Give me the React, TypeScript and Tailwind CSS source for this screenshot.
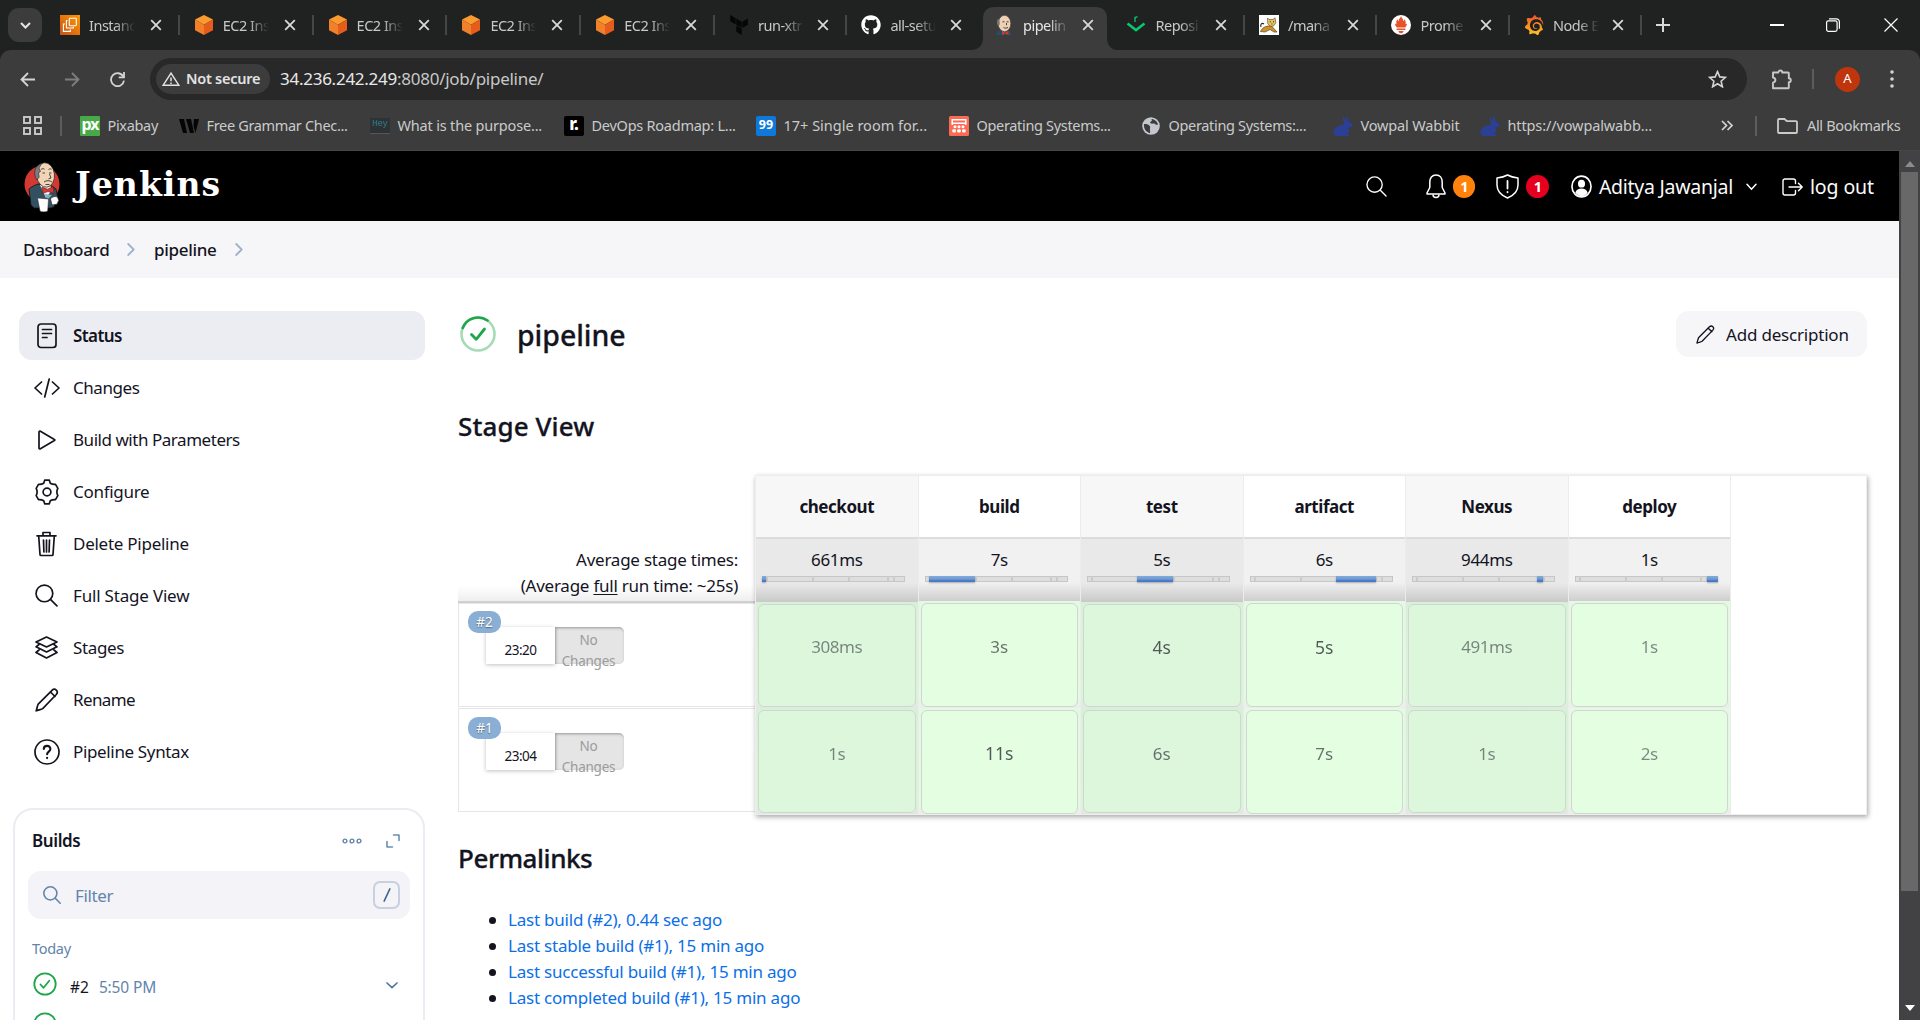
import React from "react";
import { FaGithub } from "react-icons/fa";
import { SiTerraform, SiPrometheus, SiGrafana } from "react-icons/si";

/* ---------- browser favicons ---------- */

function Ec2Icon() {
  return (
    <svg width="20" height="20" viewBox="0 0 20 20">
      <defs>
        <linearGradient id="ec2" x1="0" y1="1" x2="1" y2="0">
          <stop offset="0" stopColor="#c8511b" />
          <stop offset="1" stopColor="#ff9900" />
        </linearGradient>
      </defs>
      <rect width="20" height="20" fill="url(#ec2)" />
      <g fill="none" stroke="#fff" strokeWidth="1.1">
        <rect x="9.3" y="3.3" width="7" height="7.4" rx="0.6" />
        <path d="M7.4 5.6H6.4V13h7v-1.2" />
        <path d="M5 9H3.4v7.4h7V14.4" />
      </g>
    </svg>
  );
}

function CubeIcon() {
  return (
    <svg width="20" height="20" viewBox="0 0 20 20">
      <path d="M10 0l9 4.6L10 9.8 1 4.6z" fill="#fb9a2e" />
      <path d="M1 4.6l9 5.2V20l-9-4.7z" fill="#f0812a" />
      <path d="M19 4.6l-9 5.2V20l9-4.7z" fill="#e65c1c" />
    </svg>
  );
}

function ButlerHead() {
  return (
    <svg width="20" height="20" viewBox="0 0 20 20">
      <path d="M2 20c0-3 2-4.500 5-4.500h6c3 0 4.500 2 4.500 4.500z" fill="#264d63" />
      <ellipse cx="10.500" cy="8.500" rx="6.300" ry="8.200" fill="#efd0b4" stroke="#444" strokeWidth="0.700" />
      <path d="M4 4C2.500 6 2.700 9 4 11l1.800-1.600L5.500 5z" fill="#777" />
      <path d="M8.500 6.800h2M12.600 6.800h2M12.500 8v2.200M9.500 12.400c1.500 1 3 1 4.500 0" stroke="#333" strokeWidth="0.900" fill="none" />
      <path d="M8 16l3.200 1.800L14.500 16v4l-3.300-1.500L8 20z" fill="#d33833" />
    </svg>
  );
}

function RepoIcon() {
  return (
    <svg width="20" height="20" viewBox="0 0 20 20">
      <path d="M1.500 8.500L10 15l8.500-6.500" stroke="#08c76c" strokeWidth="2.600" fill="none" />
      <path d="M9 7V1.800M9 3.600C9.400 2.200 10.500 1.800 11.600 2" stroke="#08c76c" strokeWidth="1.300" fill="none" />
    </svg>
  );
}

function TomcatIcon() {
  return (
    <svg width="20" height="20" viewBox="0 0 20 20">
      <rect width="20" height="20" fill="#fff" />
      <path d="M8.500 3l1.500 1.500h4L16 2.800l.8 5-2 3-3 1-3-3z" fill="#e8c36a" stroke="#6b5520" strokeWidth="0.700" />
      <path d="M1.500 16.500C4 11 9 10.500 13 11.500l5 5.500h-3l-4-2.500L6 17z" fill="#cf9233" stroke="#5d4a1a" strokeWidth="0.700" />
      <path d="M2 12c-1-3 1-4.500 3-3" stroke="#222" strokeWidth="1.100" fill="none" />
      <path d="M10.800 6.800h1M14 6.800h1M12.400 9h1" stroke="#222" strokeWidth="1" />
    </svg>
  );
}

function RabbitIcon() {
  return (
    <svg width="20" height="20" viewBox="0 0 20 20" fill="#2b3f94">
      <path d="M10 1c1.800.8 2.700 2.600 3.200 4.200C13.200 3.400 13 1.500 13.700 0c1.500 1.500 1.900 3.800 1.600 5.800 2.200.5 4.200 2 4.500 4-.8 1.300-2.400 1.600-4 1.600.7 2.400.1 4.900-1.600 6.600l2 .6V20H3.500c-.9 0-1.700-.6-2-1.500-1.300-.2-1.800-1.700-1-2.700C1 11.500 5 9.300 8.700 9.200c1.100 0 1.700-.5 2.400-1.400C10.800 5.500 9.300 3.500 10 1z" />
    </svg>
  );
}

/* ---------- browser chrome ---------- */

function CloseX({ size = 12 }: { size?: number }) {
  return (
    <svg width={size} height={size} viewBox="0 0 12 12" stroke="#d6d8d9" strokeWidth="1.800" fill="none">
      <path d="M1.200 1.200l9.600 9.600M10.800 1.200l-9.600 9.600" />
    </svg>
  );
}

type Tab = { title: string; icon: React.ReactNode; active?: boolean; sep?: boolean };

const tabs: Tab[] = [
  { title: "Instanc", icon: <Ec2Icon />, sep: true },
  { title: "EC2 Ins", icon: <CubeIcon />, sep: true },
  { title: "EC2 Ins", icon: <CubeIcon />, sep: true },
  { title: "EC2 Ins", icon: <CubeIcon />, sep: true },
  { title: "EC2 Ins", icon: <CubeIcon />, sep: true },
  { title: "run-xtr", icon: <SiTerraform size={20} color="#060606" />, sep: true },
  { title: "all-setu", icon: <FaGithub size={20} color="#fff" /> },
  { title: "pipelin", icon: <ButlerHead />, active: true },
  { title: "Reposi", icon: <RepoIcon />, sep: true },
  { title: "/mana", icon: <TomcatIcon />, sep: true },
  {
    title: "Prome",
    icon: (
      <span className="flex size-5 items-center justify-center rounded-full bg-white">
        <svg width="14" height="18" viewBox="0 0 14 18" fill="#e6522c">
          <path d="M7 0c.4 2.200 2.600 3 2.400 5.200.8-.6.9-1.300.9-2.200 1.300 1.600 1.800 3.400 1.200 5.200L13 7.600c-.1 1.600-.8 2.900-1.800 3.900H2.800C1.800 10.500 1.100 9.200 1 7.600l1.500.6C1.900 6.400 2.400 4.600 3.700 3c0 .9.100 1.600.9 2.200C4.400 3 6.600 2.200 7 0zM2.600 12.400h8.800V14H2.600zM4.400 14.900h5.200c-.4 1.500-1.300 2.400-2.600 2.400s-2.200-.9-2.600-2.400z" />
        </svg>
      </span>
    ),
    sep: true,
  },
  {
    title: "Node E",
    icon: (
      <svg width="20" height="20" viewBox="0 0 24 24">
        <defs>
          <linearGradient id="graf" x1="0" y1="1" x2="0" y2="0">
            <stop offset="0" stopColor="#fcc624" />
            <stop offset="1" stopColor="#f0512a" />
          </linearGradient>
        </defs>
        <SiGrafana size={24} fill="url(#graf)" />
      </svg>
    ),
    sep: true,
  },
];

function TabStrip() {
  return (
    <div className="flex h-[50px] items-end bg-[#202221]">
      <button className="mb-2 ml-2 flex h-[34px] w-[34px] items-center justify-center rounded-[11px] bg-[#3c3c3c]">
        <svg width="11" height="7" viewBox="0 0 11 7" fill="none" stroke="#e3e3e3" strokeWidth="2.100">
          <path d="M1 1l4.500 4.500L10 1" />
        </svg>
      </button>
      <div className="ml-1 flex">
        {tabs.map((t, i) => (
          <div
            key={i}
            className={`relative flex h-[50px] items-center pl-[14px] ${i < 5 ? "w-[133.800px]" : "w-[132.500px]"}`}
          >
            {t.active && (
              <svg className="absolute top-[7px] -left-[9px]" width="146" height="43" viewBox="0 0 146 43">
                <path d="M0 43c7 0 12-4 12-12V12C12 4 16 0 24 0h100c8 0 12 4 12 12v19c0 8 5 12 10 12z" fill="#3c3c3c" />
              </svg>
            )}
            <span className="relative flex size-5 items-center justify-center">{t.icon}</span>
            <span
              className={`relative mt-px ml-[9px] w-[46px] overflow-hidden text-[14.500px] tracking-[-0.500px] whitespace-nowrap [mask-image:linear-gradient(to_right,#000_55%,transparent)] ${
                t.active ? "text-[#e6e6e6]" : "text-[#c7c9c8]"
              }`}
            >
              {t.title}
            </span>
            <span className={`relative flex ${i < 5 ? "ml-[15px]" : "ml-[13.500px]"}`}>
              <CloseX />
            </span>
            {t.sep && <span className="ml-auto h-5 w-[2px] bg-[#454746]" />}
          </div>
        ))}
      </div>
      <svg className="mb-[18px] ml-[14px]" width="14" height="14" viewBox="0 0 14 14" stroke="#d6d8d9" strokeWidth="2">
        <path d="M7 0v14M0 7h14" />
      </svg>
      <div className="mr-[22px] mb-[18px] ml-auto flex items-center">
        <span className="mr-[42px] h-[1.500px] w-[14px] bg-white" />
        <svg className="mr-[44px]" width="14" height="14" viewBox="0 0 14 14" fill="none" stroke="#fff" strokeWidth="1.200">
          <rect x="0.600" y="2.800" width="10.500" height="10.500" rx="1.800" />
          <path d="M3 .8h7.400a3 3 0 0 1 3 3v7" />
        </svg>
        <svg width="14" height="14" viewBox="0 0 14 14" stroke="#fff" strokeWidth="1.200">
          <path d="M.5.5l13 13M13.500.5l-13 13" />
        </svg>
      </div>
    </div>
  );
}

function AddressBar() {
  return (
    <div className="rounded-t-[11px] bg-[#3c3c3c]">
      <div className="flex h-[58px] items-center">
        <svg className="ml-5" width="15" height="15" viewBox="0 0 15 15" fill="none" stroke="#d3d5d5" strokeWidth="1.800">
          <path d="M15 7.500H1.500M8 1L1.500 7.500 8 14" />
        </svg>
        <svg className="ml-[30px]" width="15" height="15" viewBox="0 0 15 15" fill="none" stroke="#7d7f7f" strokeWidth="1.800">
          <path d="M0 7.500h13.500M7 1l6.500 6.500L7 14" />
        </svg>
        <svg className="ml-[30px]" width="15" height="15" viewBox="0 0 15 15" fill="none" stroke="#d3d5d5" strokeWidth="1.800">
          <path d="M13.300 4.600A6.500 6.500 0 1 0 14 8.700" />
          <path d="M14 0v5.300H8.700" />
        </svg>
        <div className="ml-[25px] flex h-[42px] w-[1597px] items-center rounded-full bg-[#282828] pl-[6px]">
          <div className="flex h-[30px] w-[114px] items-center rounded-full bg-[#3c3c3c] pl-[6px]">
            <svg width="18" height="14" viewBox="0 0 18 14" fill="none" stroke="#e3e3e3" strokeWidth="1.500">
              <path d="M9 1.200L16.800 13.200H1.200z" strokeLinejoin="miter" />
              <path d="M9 5.600v3.600M9 10.400v1.600" />
            </svg>
            <span className="ml-1.5 text-[14.500px] font-semibold tracking-[-0.250px] whitespace-nowrap text-[#e3e3e3]">
              Not secure
            </span>
          </div>
          <span className="ml-[10px] text-[17px] tracking-[-0.260px] text-[#c7c7c7]">
            <span className="text-[#e8e8e8]">34.236.242.249</span>:8080/job/pipeline/
          </span>
          <svg className="mr-[20px] ml-auto" width="19" height="18" viewBox="0 0 19 18" fill="none" stroke="#d3d5d5" strokeWidth="1.600">
            <path d="M9.500 1.600l2.300 5.300 5.600.5-4.300 3.800 1.300 5.600-4.900-3-4.900 3 1.300-5.600L1.600 7.400l5.600-.5z" />
          </svg>
        </div>
        <svg className="ml-[24px]" width="21" height="21" viewBox="0 0 21 21" fill="none" stroke="#c7c9c9" strokeWidth="1.900" strokeLinejoin="round">
          <path d="M2 3.500h5.300a2 2 0 0 1 4 0H17a.8.8 0 0 1 .8.800v5a2 2 0 0 1 0 4v5.200a.8.8 0 0 1-.8.800H2v-5.600c3.200-.6 3.200-4.600 0-5.200z" />
        </svg>
        <span className="ml-[20px] h-5 w-[2px] bg-[#5c5e5e]" />
        <span className="ml-[21px] flex size-[25px] items-center justify-center rounded-full bg-[#bf360c] text-[13px] text-white">
          A
        </span>
        <svg className="ml-[30px]" width="4" height="18" viewBox="0 0 4 18" fill="#d3d5d5">
          <circle cx="2" cy="2" r="1.800" />
          <circle cx="2" cy="9" r="1.800" />
          <circle cx="2" cy="16" r="1.800" />
        </svg>
      </div>
      <BookmarkBar />
    </div>
  );
}

function Bookmark({ icon, label, className }: { icon: React.ReactNode; label: string; className: string }) {
  return (
    <div className={`flex shrink-0 items-center gap-[7.500px] whitespace-nowrap ${className}`}>
      <span className="flex size-5 shrink-0 items-center justify-center">{icon}</span>
      <span>{label}</span>
    </div>
  );
}

function BookmarkBar() {
  return (
    <div className="flex h-[42px] items-center pb-[7px] text-[14.500px] tracking-[-0.330px] text-[#c9cbcb]">
      <svg className="ml-[23px]" width="19" height="19" viewBox="0 0 19 19" fill="none" stroke="#c9cbcb" strokeWidth="1.900">
        <rect x="1" y="1" width="6" height="6" />
        <rect x="12" y="1" width="6" height="6" />
        <rect x="1" y="12" width="6" height="6" />
        <rect x="12" y="12" width="6" height="6" />
      </svg>
      <span className="ml-[18px] h-5 w-[2px] bg-[#5c5e5e]" />
      <Bookmark
        className="ml-[18px] w-[99px]"
        label="Pixabay"
        icon={
          <span className="flex size-5 items-center justify-center rounded-[1px] bg-[#48a947] pb-[3px] text-[16px] font-bold tracking-[-1px] text-white">
            px
          </span>
        }
      />
      <Bookmark
        className="w-[191px]"
        label="Free Grammar Chec..."
        icon={
          <svg width="20" height="14" viewBox="0 0 20 14" fill="#050505">
            <path d="M0 0h5l3 14H4zM7 0h5l3 14h-4zM15 0h5l-3.500 14-2-7z" />
          </svg>
        }
      />
      <Bookmark
        className="w-[194px] tracking-[-0.180px]"
        label="What is the purpose..."
        icon={
          <span className="flex h-4 w-5 items-center justify-center border-b border-[#555] bg-[#2d3234] font-['Liberation_Mono'] text-[9px] text-[#2f7f86]">
            Hey
          </span>
        }
      />
      <Bookmark
        className="w-[192px] tracking-[-0.250px]"
        label="DevOps Roadmap: L..."
        icon={
          <span className="flex size-5 items-center justify-center rounded-[2px] bg-black pb-1 text-[17px] font-extrabold text-white">
            r.
          </span>
        }
      />
      <Bookmark
        className="w-[193px] tracking-[0px]"
        label="17+ Single room for..."
        icon={
          <span className="flex size-5 items-center justify-center rounded-[2px] bg-[#0f78db] text-[12.500px] font-bold text-white">
            99
          </span>
        }
      />
      <Bookmark
        className="w-[192px]"
        label="Operating Systems..."
        icon={
          <svg width="20" height="20" viewBox="0 0 20 20">
            <rect width="20" height="20" rx="1.500" fill="#ff6a55" />
            <path d="M3.200 9V3.700h13.600V9M3 7.200h14" stroke="#fff" strokeWidth="1.500" fill="none" />
            <g fill="#fff">
              <circle cx="6" cy="10.800" r="1.500" />
              <circle cx="10" cy="10.800" r="1.500" />
              <circle cx="14" cy="10.800" r="1.500" />
              <rect x="3.300" y="13.200" width="3.600" height="3.200" rx="1" />
              <rect x="8.200" y="13.200" width="3.600" height="3.200" rx="1" />
              <rect x="13.100" y="13.200" width="3.600" height="3.200" rx="1" />
            </g>
          </svg>
        }
      />
      <Bookmark
        className="w-[192px]"
        label="Operating Systems:..."
        icon={
          <svg width="18" height="18" viewBox="0 0 18 18">
            <circle cx="9" cy="9" r="8.800" fill="#c3c6cc" />
            <path d="M2 7c3 0 5 .5 6 2.500.5 1.500-.5 2.500 0 4 .3 1 .2 1.600 0 2.500C4.500 15.500 1.500 12 2 7zM9 2c1.500.5 1 2 0 2.500S7.500 6 9 6.500s3-.5 4 .5 2 1 3 .5C15.500 4.500 12.500 2 9 2z" fill="#3c3c3c" />
          </svg>
        }
      />
      <Bookmark className="w-[147px] tracking-[-0.150px]" label="Vowpal Wabbit" icon={<RabbitIcon />} />
      <Bookmark className="w-[180px] tracking-[-0.120px]" label="https://vowpalwabb..." icon={<RabbitIcon />} />
      <svg className="ml-[61px]" width="12" height="11" viewBox="0 0 12 11" fill="none" stroke="#d3d5d5" strokeWidth="1.700">
        <path d="M1 1l4.500 4.500L1 10M6.500 1L11 5.500 6.500 10" />
      </svg>
      <span className="ml-[22px] h-5 w-[2px] bg-[#5c5e5e]" />
      <svg className="ml-[20px]" width="21" height="16" viewBox="0 0 21 16" fill="none" stroke="#c9cbcb" strokeWidth="1.800">
        <path d="M1 2a1 1 0 0 1 1-1h5.500l2.300 2.200H19a1 1 0 0 1 1 1V14a1 1 0 0 1-1 1H2a1 1 0 0 1-1-1z" />
      </svg>
      <span className="ml-[9px]">All Bookmarks</span>
    </div>
  );
}

/* ---------- Jenkins header ---------- */

function JenkinsLogo() {
  return (
    <svg width="38" height="52" viewBox="3 5 38 52">
      <ellipse cx="22" cy="28" rx="17.500" ry="18" fill="#d33833" />
      <path d="M9 33c2-2 6-4 9-5l14 2 4 3 2 10-4 8-3 1H14l-3-3z" fill="#335061" stroke="#111" strokeWidth="0.800" />
      <path d="M20 29l6 13 6-8-2-5z" fill="#e8eef2" />
      <ellipse cx="25.500" cy="19" rx="9" ry="12.300" fill="#f0d6b7" stroke="#222" strokeWidth="0.700" transform="rotate(-6 25 19)" />
      <path d="M22 7c-4 1.500-7 5-7.300 9-.2 3 .8 6 2.300 8l2.200-3-.7-4 2-1.500L19 12z" fill="#7c7c80" stroke="#222" strokeWidth="0.600" />
      <path d="M21 13.500c1-1 2.500-1 3.500-.3M28.500 13.500c1-.8 2-.8 3-.2M22.500 17h2.500M29 17h2.500M29.500 18l1.500 4-2.500.8M24 26c2-1.800 6-1.800 8 0M25.500 28.500h4" stroke="#333" strokeWidth="0.900" fill="none" />
      <path d="M22 31l5.500 2.200L33 30.500l1 7-6-2-5.500 2z" fill="#d33833" stroke="#5a1010" strokeWidth="0.500" />
      <path d="M24 38l4 5 4-4z" fill="#81b0c4" />
      <path d="M17.500 42l11 1-.8 12c-2 1.200-6 1.200-7.700 0z" fill="#fff" stroke="#222" strokeWidth="0.500" />
      <path d="M30.500 43c1.500-2.500 4.500-3 7-2l1.200 3.500-1.700 3.700-5 .8z" fill="#fff" stroke="#222" strokeWidth="0.700" />
    </svg>
  );
}

function Magnifier({ size, stroke, width }: { size: number; stroke: string; width: number }) {
  return (
    <svg width={size} height={size} viewBox="0 0 22 22" fill="none" stroke={stroke} strokeWidth={width} strokeLinecap="round">
      <circle cx="9" cy="9" r="8" />
      <path d="M15 15l6 6" />
    </svg>
  );
}

function PageHeader() {
  return (
    <header className="flex h-[70px] shrink-0 items-center bg-black pt-px pl-[23px] text-[19.500px] tracking-[-0.350px] text-[#fafafa]">
      <JenkinsLogo />
      <span className="mb-[4px] ml-[14px] font-['DejaVu_Serif'] text-[33px] leading-none font-bold tracking-[1.100px] text-white">
        Jenkins
      </span>
      <span className="ml-auto flex">
        <Magnifier size={21} stroke="#fff" width={1.400} />
      </span>
      <svg className="ml-[39px]" width="20" height="25" viewBox="0 0 20 25" fill="none" stroke="#fff" strokeWidth="1.500" strokeLinejoin="round">
        <path d="M10 1C6 1 3.800 4 3.800 8v5.500L1 19v1h18v-1l-2.800-5.500V8c0-4-2.200-7-6.200-7z" />
        <path d="M7 20.500c0 4 6 4 6 0" />
      </svg>
      <Badge color="bg-[#ff820a]" />
      <svg className="ml-[21px]" width="23" height="25" viewBox="0 0 23 25" fill="none" stroke="#fff" strokeWidth="1.500" strokeLinejoin="round" strokeLinecap="round">
        <path d="M11.500 1C8 3 4.500 3.600 1 4v7c0 6 4.500 10.500 10.500 13C17.500 21.500 22 17 22 11V4c-3.500-.4-7-1-10.500-3z" />
        <path d="M11.500 7v7.500M11.500 18v.3" strokeWidth="1.800" />
      </svg>
      <Badge color="bg-[#e6001f]" />
      <svg className="ml-[22px]" width="21" height="23" viewBox="0 0 22 22" preserveAspectRatio="none">
        <circle cx="11" cy="11" r="10" fill="none" stroke="#fff" strokeWidth="1.700" />
        <circle cx="11" cy="8.300" r="3.700" fill="#fff" />
        <path d="M4.500 17c1-3 3.500-4 6.500-4s5.500 1 6.500 4c-3.500 4.300-9.500 4.300-13 0z" fill="#fff" />
      </svg>
      <span className="ml-[7px] tracking-[-0.270px]">Aditya Jawanjal</span>
      <svg className="mr-[25px] ml-[13px]" width="11" height="8" viewBox="0 0 11 8" fill="none" stroke="#fff" strokeWidth="1.500" strokeLinecap="round">
        <path d="M1 1.200l4.500 5 4.500-5" />
      </svg>
      <svg width="21" height="18" viewBox="0 0 21 18" fill="none" stroke="#fff" strokeWidth="1.400" strokeLinecap="round" strokeLinejoin="round">
        <path d="M13.500 5.500V3a2 2 0 0 0-2-2H3a2 2 0 0 0-2 2v12a2 2 0 0 0 2 2h8.500a2 2 0 0 0 2-2v-2.500M7 9h13M16.500 5.200L20.200 9l-3.700 3.800" />
      </svg>
      <span className="mr-[25px] ml-[7px] tracking-[-0.100px]">log out</span>
    </header>
  );
}

function Badge({ color }: { color: string }) {
  return (
    <span className={`ml-[7px] flex size-[22.500px] items-center justify-center rounded-full text-[14.500px] font-bold text-white ${color}`}>
      1
    </span>
  );
}

function Crumb({ label }: { label: string }) {
  return (
    <>
      <span>{label}</span>
      <svg className="mr-[18.500px] ml-[18px]" width="8" height="13" viewBox="0 0 8 13" fill="none" stroke="#9fb1cb" strokeWidth="1.800" strokeLinecap="round" strokeLinejoin="round">
        <path d="M1.200 1l5.500 5.500-5.500 5.500" />
      </svg>
    </>
  );
}

/* ---------- side panel ---------- */

const ink = { fill: "none", stroke: "#14141f", strokeWidth: 1.700, strokeLinecap: "round", strokeLinejoin: "round" } as const;

function Pencil({ size }: { size: number }) {
  return (
    <svg width={size} height={size} viewBox="0 0 24 24" {...ink}>
      <path d="M1.200 22.800c1-2.600 1-4.800 2-6.600L17 2.300c3-2.800 7 1 4.300 4.200L7.700 20.600c-1.800 1.200-4.200 1.200-6.500 2.200zM15.500 4l4.500 4.500" />
    </svg>
  );
}

const tasks: { label: string; track: string; icon: React.ReactNode }[] = [
  {
    label: "Status",
    track: "font-semibold tracking-[-0.600px]",
    icon: (
      <svg width="20" height="26" viewBox="0 0 20 26" {...ink}>
        <rect x="1" y="1" width="18" height="23.500" rx="3" />
        <path d="M5.500 6.500h9M5.500 10.500h9M5.500 14.500h4.500" />
      </svg>
    ),
  },
  {
    label: "Changes",
    track: "tracking-[-0.450px]",
    icon: (
      <svg width="26" height="20" viewBox="0 0 26 20" {...ink}>
        <path d="M7.500 4L1 10l6.500 6M18.500 4l6.500 6-6.500 6M15.200 1l-4.500 18" />
      </svg>
    ),
  },
  {
    label: "Build with Parameters",
    track: "tracking-[-0.460px]",
    icon: (
      <svg width="18" height="20" viewBox="0 0 18 20" {...ink}>
        <path d="M1 2v16c0 .8.700 1.200 1.400.8l14-8.200c.6-.4.600-.9 0-1.200l-14-8.200C1.700.8 1 1.200 1 2z" />
      </svg>
    ),
  },
  {
    label: "Configure",
    track: "tracking-[-0.300px]",
    icon: (
      <svg width="24" height="26" viewBox="0 0 24 26" {...ink}>
        <circle cx="12" cy="13" r="3.900" />
        <path d="M9.700 1.200h4.600l1 3c2.400 1.500 2.600 1.500 5.200 1.200l2.300 4c-.8 2-.9 1.500-.9 3.600s.1 1.600.9 3.600l-2.300 4c-2.600-.3-2.800-.3-5.200 1.200l-1 3H9.700l-1-3c-2.400-1.500-2.600-1.500-5.200-1.200l-2.300-4c.8-2 .9-1.500.9-3.600s-.1-1.600-.9-3.600l2.300-4c2.600.3 2.800.3 5.200-1.200z" />
      </svg>
    ),
  },
  {
    label: "Delete Pipeline",
    track: "tracking-[-0.260px]",
    icon: (
      <svg width="21" height="26" viewBox="0 0 21 26" {...ink}>
        <path d="M1 4.800h19M7 4.500V1.500h7v3M2.700 5l1.300 18.500c0 .7.500 1 1 1h11c.6 0 1-.3 1-1L18.300 5M7.500 9l.4 12M10.500 9v12M13.500 9l-.4 12" />
      </svg>
    ),
  },
  { label: "Full Stage View", track: "tracking-[-0.190px]", icon: <Magnifier size={23} stroke="#14141f" width={1.600} /> },
  {
    label: "Stages",
    track: "tracking-[-0.350px]",
    icon: (
      <svg width="23" height="23" viewBox="0 0 23 23" {...ink}>
        <path d="M11.500 1L22 6l-10.500 5L1 6zM4 8.500L1 10.800l10.500 5.200L22 10.800l-3-2.300M4 14L1 16.500 11.500 22 22 16.500 19 14" />
      </svg>
    ),
  },
  { label: "Rename", track: "tracking-[-0.600px]", icon: <Pencil size={24} /> },
  {
    label: "Pipeline Syntax",
    track: "tracking-[-0.350px]",
    icon: (
      <svg width="26" height="26" viewBox="0 0 26 26" {...ink}>
        <circle cx="13" cy="13" r="12" />
        <path d="M9.800 10c0-4.200 6.600-4.200 6.600 0 0 2.600-3.300 2.600-3.300 5.200M13.100 18.800v.3" strokeWidth="2.100" />
      </svg>
    ),
  },
];

function CheckCircle() {
  return (
    <svg width="24" height="24" viewBox="0 0 24 24" fill="none" stroke="#1ea64b" strokeWidth="1.800" strokeLinecap="round" strokeLinejoin="round">
      <circle cx="12" cy="12" r="10.700" />
      <path d="M7.500 12.500l3 3.300 5.800-7" />
    </svg>
  );
}

function BuildsCard() {
  return (
    <section className="mt-[32px] -ml-[6px] h-[300px] w-[412px] rounded-t-[20px] border-2 border-[#ebebf2] px-[13px] pt-[17px]">
      <div className="flex h-[28px] items-center pr-[10px] pl-[4px]">
        <h2 className="text-[17px] font-semibold tracking-[-0.400px]">Builds</h2>
        <svg className="ml-auto" width="20" height="6" viewBox="0 0 20 6" fill="none" stroke="#6384ab" strokeWidth="1.400">
          <circle cx="3" cy="3" r="1.900" />
          <circle cx="10" cy="3" r="1.900" />
          <circle cx="17" cy="3" r="1.900" />
        </svg>
        <svg className="ml-6" width="14" height="14" viewBox="0 0 14 14" fill="none" stroke="#6f8db2" strokeWidth="1.600" strokeLinecap="round" strokeLinejoin="round">
          <path d="M7.500 1H13v5.500M6.500 13H1V7.500" />
        </svg>
      </div>
      <div className="mt-[16px] flex h-[48px] items-center rounded-[12.500px] bg-[#f3f3f8] pr-[10px] pl-[15px]">
        <Magnifier size={18} stroke="#6384ab" width={1.900} />
        <span className="mt-px ml-[14px] text-[17px] tracking-[-0.350px] text-[#6384ab]">Filter</span>
        <span className="ml-auto flex h-7 w-[27px] items-center justify-center rounded-[7px] border-2 border-[#c6d0de]">
          <svg width="8" height="14" viewBox="0 0 8 14" stroke="#44648c" strokeWidth="1.700" strokeLinecap="round">
            <path d="M1.200 13L6.800 1" />
          </svg>
        </span>
      </div>
      <div className="mt-[18px] pl-[4px] text-[14.500px] leading-[22px] tracking-[-0.300px] text-[#6384ab]">Today</div>
      <div className="mt-[10px] flex h-[32px] items-center pr-[12px] pl-[5px]">
        <span className="mb-[2px] flex"><CheckCircle /></span>
        <span className="mt-[5px] ml-[13px] text-[15.500px]">#2</span>
        <span className="mt-[5px] ml-[10px] text-[15.500px] tracking-[-0.150px] text-[#6384ab]">5:50 PM</span>
        <svg className="ml-auto" width="12" height="7" viewBox="0 0 12 7" fill="none" stroke="#5478a3" strokeWidth="1.700" strokeLinecap="round" strokeLinejoin="round">
          <path d="M1 1l5 4.700L11 1" />
        </svg>
      </div>
      <div className="mt-[11px] pl-[5px]"><CheckCircle /></div>
    </section>
  );
}

function SidePanel() {
  return (
    <aside className="w-[425px] shrink-0 pt-[33px] pl-[19px]">
      <nav className="flex flex-col gap-[3px]">
        {tasks.map((t, i) => (
          <div key={t.label} className={`flex h-[49px] items-center rounded-[12.500px] pl-[12px] ${i === 0 ? "bg-[#ecedf3]" : ""}`}>
            <span className="flex w-[31px] justify-center">{t.icon}</span>
            <span className={`ml-[11px] text-[17px] whitespace-nowrap ${t.track}`}>{t.label}</span>
          </div>
        ))}
      </nav>
      <BuildsCard />
    </aside>
  );
}

/* ---------- stage view ---------- */

type Stage = { name: string; avg: string; start: number; end: number; runs: { t: string; cls: string }[] };

const faint = "text-[17px] tracking-[-0.400px] opacity-50";
const mid = "text-[17px] opacity-60";
const strong = "text-[17.500px] opacity-70";

const stages: Stage[] = [
  { name: "checkout", avg: "661ms", start: 0, end: 4, runs: [{ t: "308ms", cls: faint }, { t: "1s", cls: faint }] },
  { name: "build", avg: "7s", start: 4, end: 50, runs: [{ t: "3s", cls: mid }, { t: "11s", cls: strong }] },
  { name: "test", avg: "5s", start: 50, end: 86, runs: [{ t: "4s", cls: strong }, { t: "6s", cls: mid }] },
  { name: "artifact", avg: "6s", start: 86, end: 126, runs: [{ t: "5s", cls: strong }, { t: "7s", cls: mid }] },
  { name: "Nexus", avg: "944ms", start: 125, end: 131, runs: [{ t: "491ms", cls: faint }, { t: "1s", cls: faint }] },
  { name: "deploy", avg: "1s", start: 132, end: 143, runs: [{ t: "1s", cls: faint }, { t: "2s", cls: faint }] },
];

const ticks = [4, 50, 86, 125, 131];

function StageColumn({ s, i }: { s: Stage; i: number }) {
  const odd = i % 2 === 0;
  return (
    <div className="flex w-[162.500px] flex-col border-r border-[#ececec]">
      <div className={`flex h-[61px] items-center justify-center pt-px text-[17px] font-bold tracking-[-0.450px] ${odd ? "bg-[#f7f7f7]" : "bg-white"}`}>
        {s.name}
      </div>
      <div
        className={`flex h-[65px] flex-col border-t-2 border-[#dcdcdc] px-[6px] pt-[9px] ${
          odd ? "bg-[linear-gradient(#e9e9e9_70%,#c9c9c9)]" : "bg-[linear-gradient(#f1f1f1_70%,#cecece)]"
        }`}
      >
        <span className="text-center text-[17px] leading-6 tracking-[-0.350px]">{s.avg}</span>
        <div className="relative mt-[4px] h-[6px] w-[143px] border border-[#c6c6c6] bg-[#dedede]">
          {ticks.map((t) => (
            <span key={t} className="absolute -top-px h-[5px] w-[2px] bg-[#cbcbcb]" style={{ left: t - 1 }} />
          ))}
          <span
            className="absolute -top-px h-[6px] bg-[linear-gradient(#84aad6,#6f9bd4_50%,#4678c8_80%)] shadow-[0_1px_2px_rgba(0,0,0,0.300)]"
            style={{ left: s.start - 1, width: s.end - s.start }}
          />
        </div>
      </div>
      {s.runs.map((r, k) => (
        <div
          key={k}
          className={`flex flex-col px-[2px] pt-[2px] ${k === 0 ? "h-[107px]" : "h-[106px]"} ${
            odd ? "bg-[linear-gradient(#d9f0d8,#d9f4d8_90%,#e4e6e4)]" : "bg-[linear-gradient(#e4f8e4,#e3fbe1_90%,#ececec)]"
          }`}
        >
          <div
            className={`flex items-center justify-center rounded-[6px] border border-[#cfd8cf] pb-[17px] ${
              odd ? "h-[103px] bg-[#ddf7dc]" : "h-[104px] bg-[#e3fee1]"
            }`}
          >
            <span className={r.cls}>{r.t}</span>
          </div>
        </div>
      ))}
    </div>
  );
}

function RunRow({ id, time, className }: { id: string; time: string; className: string }) {
  return (
    <div className={`border border-r-0 border-[#e6e6e6] bg-white pl-[9px] ${className}`}>
      <span className="relative z-10 flex h-[22px] w-[33px] items-center justify-center rounded-[10px] bg-[#8bafd4] text-[13.500px] text-white [text-shadow:0_1px_1px_rgba(0,0,0,0.400)]">
        {id}
      </span>
      <div className="-mt-[6px] ml-[18px] flex h-[37px]">
        <span className="flex w-[69px] items-center justify-center bg-white pt-[9px] text-[13.500px] tracking-[-0.500px] shadow-[0_1px_4px_rgba(0,0,0,0.250)]">
          {time}
        </span>
        <span className="w-[69px] rounded-r-[5px] bg-[#e5e5e5] pt-[3px] pr-[2px] text-center text-[13.500px] leading-[20.500px] tracking-[-0.250px] text-[#9b9b9b] shadow-[inset_1px_1px_3px_rgba(0,0,0,0.350)]">
          No Changes
        </span>
      </div>
    </div>
  );
}

function StageView() {
  return (
    <div className="mt-[30px] flex h-[340px] w-[1409px]">
      <div className="flex w-[297px] flex-col pt-[64px]">
        <div className="flex h-[64px] flex-col border-b-2 border-[#cfcfcf] bg-[linear-gradient(#fff_75%,#efefef)] pt-[8px] pr-[17px] text-right text-[17px] leading-[26px] tracking-[-0.240px]">
          <span>Average stage times:</span>
          <span>
            (Average <u className="underline-offset-2">full</u> run time: ~25s)
          </span>
        </div>
        <RunRow id="#2" time="23:20" className="mt-0 h-[104px] pt-[7px]" />
        <RunRow id="#1" time="23:04" className="mt-[1px] h-[104px] pt-[8px]" />
      </div>
      <div className="flex w-[1112px] border border-[#eee] bg-white shadow-[1px_2px_5px_rgba(0,0,0,0.350)]">
        {stages.map((s, i) => (
          <StageColumn key={s.name} s={s} i={i} />
        ))}
      </div>
    </div>
  );
}

const links = [
  "Last build (#2), 0.44 sec ago",
  "Last stable build (#1), 15 min ago",
  "Last successful build (#1), 15 min ago",
  "Last completed build (#1), 15 min ago",
];

function MainPanel() {
  return (
    <main className="min-w-0 flex-1 pt-[33px] pl-[33px]">
      <div className="flex h-[46px] items-center pr-[32px]">
        <svg className="ml-[2px]" width="36" height="36" viewBox="0 0 36 36" fill="none" strokeLinecap="round" strokeLinejoin="round">
          <circle cx="18" cy="18" r="16.500" stroke="#a5dbb7" strokeWidth="2.600" />
          <path d="M2.700 12A16.500 16.500 0 0 1 27.500 4.500" stroke="#1ea64b" strokeWidth="2.600" />
          <path d="M11.500 18.500l4.700 4.800 8.300-10.300" stroke="#1ea64b" strokeWidth="2.800" />
        </svg>
        <h1 className="mt-[2px] ml-[21px] text-[28.500px] font-medium tracking-[-0.050px] [-webkit-text-stroke:0.300px_#14141f]">pipeline</h1>
        <button className="ml-auto flex h-[46px] w-[191px] items-center rounded-[12.500px] bg-[#f6f6f9] pl-[20px] text-[17px] tracking-[-0.200px] whitespace-nowrap">
          <Pencil size={19} />
          <span className="mt-px ml-[11px]">Add description</span>
        </button>
      </div>
      <h2 className="mt-[50px] text-[26px] leading-[38px] font-medium tracking-[0.100px] [-webkit-text-stroke:0.300px_#14141f]">Stage View</h2>
      <StageView />
      <h2 className="mt-[24px] text-[26px] leading-[38px] font-medium tracking-[-0.450px] [-webkit-text-stroke:0.300px_#14141f]">Permalinks</h2>
      <ul className="mt-[30px] text-[17px] leading-[26px] tracking-[-0.220px] text-[#0b6fe8]">
        {links.map((l) => (
          <li key={l} className="flex items-center pl-[31px]">
            <span className="mr-[12px] size-[7px] rounded-full bg-[#14141f]" />
            {l}
          </li>
        ))}
      </ul>
    </main>
  );
}

function Scrollbar() {
  return (
    <div className="flex w-[21px] shrink-0 flex-col items-center bg-[#424244]">
      <svg className="mt-[10px]" width="10" height="6" viewBox="0 0 10 6" fill="#8c8c8c">
        <path d="M5 0l5 6H0z" />
      </svg>
      <div className="mt-[5px] h-[719px] w-[17px] bg-[#686868]" />
      <svg className="mt-auto mb-[9px]" width="10" height="6" viewBox="0 0 10 6" fill="#fff">
        <path d="M5 6L0 0h10z" />
      </svg>
    </div>
  );
}

export default function App() {
  return (
    <div className="flex h-[1020px] w-[1920px] flex-col overflow-hidden bg-[#202221] font-['Noto_Sans','Open_Sans',sans-serif]">
      <TabStrip />
      <AddressBar />
      <div className="flex min-h-0 flex-1 border-t border-[#464646]">
        <div className="flex w-[1899px] flex-col overflow-hidden bg-white text-[#14141f]">
          <PageHeader />
          <div className="flex h-[57px] shrink-0 items-center bg-[#f6f6f8] pl-[23px] text-[17px] font-medium tracking-[-0.300px]">
            <Crumb label="Dashboard" />
            <Crumb label="pipeline" />
          </div>
          <div className="flex min-h-0 flex-1">
            <SidePanel />
            <MainPanel />
          </div>
        </div>
        <Scrollbar />
      </div>
    </div>
  );
}
